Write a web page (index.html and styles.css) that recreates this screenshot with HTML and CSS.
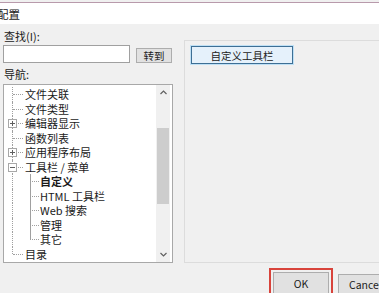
FILE: index.html
```html
<!DOCTYPE html>
<html>
<head>
<meta charset="utf-8">
<link rel="stylesheet" href="styles.css">
</head>
<body>
<div class="dialog">
  <div class="titlebar"><span class="title">配置</span></div>
  <div class="main">
    <div class="left">
      <div class="label lbl-find">查找(I):</div>
      <div class="search-row">
        <div class="input"></div>
        <div class="btn btn-go">转到</div>
      </div>
      <div class="label lbl-nav">导航:</div>
      <div class="tree">
        <div class="tree-list">
          <div class="row l1 first">文件关联</div>
          <div class="row l1">文件类型</div>
          <div class="row l1 has-exp"><span class="exp plus"></span>编辑器显示</div>
          <div class="row l1">函数列表</div>
          <div class="row l1 has-exp"><span class="exp plus"></span>应用程序布局</div>
          <div class="row l1 has-exp"><span class="exp minus"></span>工具栏 / 菜单</div>
          <div class="row l2 bold">自定义</div>
          <div class="row l2">HTML 工具栏</div>
          <div class="row l2">Web 搜索</div>
          <div class="row l2">管理</div>
          <div class="row l2 last2">其它</div>
          <div class="row l1 last">目录</div>
        </div>
        <div class="scrollbar">
          <div class="arrow up"><svg width="7" height="5" viewBox="0 0 7 5"><path d="M0.5 4 L3.5 1 L6.5 4" fill="none" stroke="#606060" stroke-width="1.2"/></svg></div>
          <div class="track"><div class="thumb"></div></div>
          <div class="arrow down"><svg width="7" height="5" viewBox="0 0 7 5"><path d="M0.5 1 L3.5 4 L6.5 1" fill="none" stroke="#606060" stroke-width="1.2"/></svg></div>
        </div>
      </div>
    </div>
    <div class="panel">
      <div class="btn btn-custom">自定义工具栏</div>
    </div>
  </div>
  <div class="footer">
    <div class="ok-mark"><div class="btn btn-ok">OK</div></div>
    <div class="btn btn-cancel">Cancel</div>
  </div>
</div>
</body>
</html>
```

FILE: styles.css
```css
html, body {
  margin: 0;
  padding: 0;
}
body {
  width: 379px;
  height: 293px;
  overflow: hidden;
  background: #f0f0f0;
  font-family: "Noto Sans CJK SC", "Noto Sans", sans-serif;
  font-size: 11px;
  color: #1a1a1a;
}
.dialog {
  display: flex;
  flex-direction: column;
  height: 293px;
}
.titlebar {
  height: 21px;
  margin-top: 2px;
  border-top: 1px solid #b89aab;
  background: #ffffff;
  display: flex;
  align-items: center;
}
.title {
  margin-left: -3px;
  font-size: 11.5px;
  color: #222;
}
.main {
  display: flex;
  height: 239px;
}
.left {
  width: 170px;
  padding-left: 3px;
  display: flex;
  flex-direction: column;
}
.label {
  height: 14px;
  line-height: 14px;
  padding-left: 1px;
}
.lbl-find {
  margin-top: 5px;
}
.search-row {
  display: flex;
  align-items: flex-end;
  margin-top: 2px;
  height: 18px;
}
.input {
  width: 125px;
  height: 16px;
  background: #fff;
  border: 1px solid #a0a0a0;
}
.btn {
  box-sizing: border-box;
  background: #e1e1e1;
  border: 1px solid #adadad;
  display: flex;
  align-items: center;
  justify-content: center;
  font-size: 10.5px;
  color: #222;
}
.btn-go {
  margin-left: 6px;
  width: 36px;
  height: 15px;
}
.lbl-nav {
  margin-top: 4px;
}
.tree {
  margin-top: 3px;
  height: 179px;
  box-sizing: border-box;
  border: 1px solid #a8a8a8;
  background: #fff;
  display: flex;
}
.tree-list {
  flex: 1;
  padding-top: 2px;
}
.row {
  position: relative;
  height: 14.5px;
  line-height: 14.5px;
  padding-left: 21px;
  white-space: nowrap;
}
.row::before {
  content: "";
  position: absolute;
  left: 8px;
  top: 0;
  bottom: 0;
  border-left: 1px dotted #a0a0a0;
}
.row.l1::after {
  content: "";
  position: absolute;
  left: 9px;
  top: 7px;
  width: 10px;
  border-top: 1px dotted #a0a0a0;
}
.row.last::before {
  bottom: 7px;
}
.row.l2 {
  padding-left: 36px;
}
.row.l2::after {
  content: "";
  position: absolute;
  left: 26px;
  top: 0;
  height: 7px;
  width: 8px;
  border-left: 1px dotted #a0a0a0;
  border-bottom: 1px dotted #a0a0a0;
}
.row.l2 > .vline2 {
  display: none;
}
.row.l2 {
  background-image: linear-gradient(#a0a0a0, #a0a0a0);
  background-repeat: no-repeat;
  background-size: 1px 100%;
  background-position: 26px 0;
}
.row.last2 {
  background-size: 1px 7px;
}
.row.bold {
  font-weight: bold;
}
.exp {
  position: absolute;
  left: 4px;
  top: 3px;
  width: 7px;
  height: 7px;
  border: 1px solid #a8a8a8;
  background: #fff;
  z-index: 1;
}
.exp::before {
  content: "";
  position: absolute;
  left: 1px;
  top: 3px;
  width: 5px;
  height: 1px;
  background: #606060;
}
.exp.plus::after {
  content: "";
  position: absolute;
  left: 3px;
  top: 1px;
  width: 1px;
  height: 5px;
  background: #606060;
}
.scrollbar {
  width: 14px;
  margin: 0 2px 0 0;
  background: #f0f0f0;
  display: flex;
  flex-direction: column;
}
.arrow {
  height: 15px;
  display: flex;
  align-items: center;
  justify-content: center;
}
.track {
  flex: 1;
  padding-top: 28px;
}
.thumb {
  height: 76px;
  background: #cdcdcd;
  margin: 0 1px;
}
.panel {
  margin-left: 11px;
  margin-top: 16px;
  margin-bottom: 0;
  flex: 1;
  border: 1px solid #dcdcdc;
  border-right: none;
  padding: 5px 0 0 6px;
}
.btn-custom {
  width: 102px;
  height: 18px;
  border: 1px solid #3d6f95;
  box-shadow: 0 0 0 1px #bfe0f5;
  background: #e5f1fb;
}
.footer {
  flex: 1;
  display: flex;
  align-items: flex-end;
  padding-left: 269px;
}
.ok-mark {
  border: 2px solid #d8433b;
  border-bottom: none;
  padding: 2px 2px 0 2px;
  height: 21px;
}
.btn-ok {
  width: 56px;
  height: 21px;
  border-bottom: none;
}
.btn-cancel {
  margin-left: 5px;
  width: 60px;
  height: 19px;
  border-bottom: none;
  justify-content: flex-start;
  padding-left: 10px;
}
```
